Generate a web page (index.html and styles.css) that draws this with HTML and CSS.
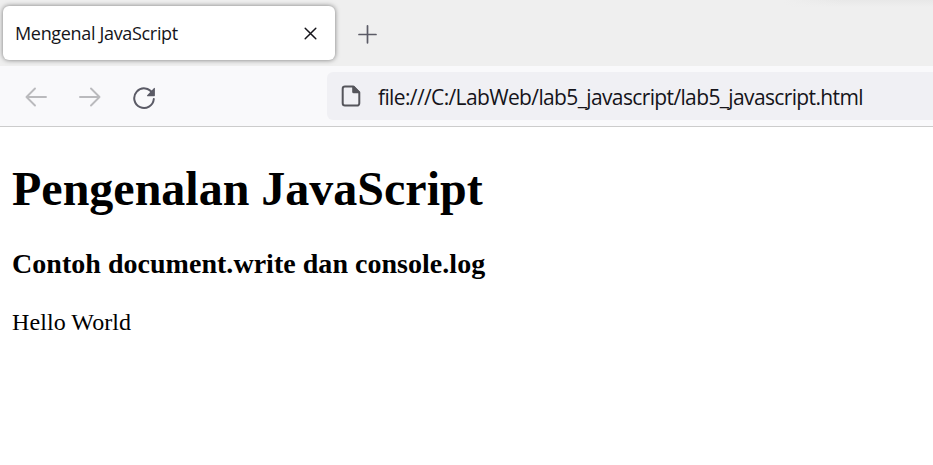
FILE: index.html
```html
<!DOCTYPE html>
<html lang="id">
<head>
<meta charset="utf-8">
<title>Mengenal JavaScript</title>
<link rel="stylesheet" href="styles.css">
</head>
<body>
<div class="tabbar">
  <div class="tab">
    <span class="tab-title">Mengenal JavaScript</span>
    <svg class="close" width="13" height="13" viewBox="0 0 13 13"><path d="M1.2 1.2l10.6 10.6M11.8 1.2L1.2 11.8"/></svg>
  </div>
  <svg class="plus" width="20" height="20" viewBox="0 0 20 20"><path d="M10.500 1.800v17M2 10.500h17"/></svg>
</div>
<div class="toolbar">
  <svg class="nav" width="24" height="24" viewBox="0 0 24 24"><path d="M22 12H2.5M11 3.5L2.5 12l8.500 8.500"/></svg>
  <svg class="nav" width="24" height="24" viewBox="0 0 24 24"><path d="M2 12h19.500M13 3.500l8.500 8.500-8.500 8.500"/></svg>
  <svg class="reload" width="24" height="24" viewBox="0 0 24 24"><path class="arc" d="M20.600 7.400A9.800 9.800 0 1 0 21.800 13"/><path class="head" d="M22.900 2.300v7.200q0 .7-.7.7h-6.600q-1.200 0-.4-.9l6.600-7q1.100-.9 1.100 0z"/></svg>
  <div class="urlbar">
    <svg class="doc" width="20" height="22" viewBox="0 0 20 22"><path class="page" d="M12 1.400H4A2.300 2.300 0 0 0 1.700 3.700v14.600A2.300 2.300 0 0 0 4 20.600h12a2.300 2.300 0 0 0 2.300-2.300V7.500L12.300 1.400z"/><path class="fold" d="M11.200 1h2L19 7v1.200h-6.300q-1.500 0-1.500-1.500z"/></svg>
    <span class="url">file:///C:/LabWeb/lab5_javascript/lab5_javascript.html</span>
  </div>
</div>
<main>
  <h1>Pengenalan JavaScript</h1>
  <h3>Contoh document.write dan console.log</h3>
  <p>Hello World</p>
</main>
</body>
</html>
```
FILE: styles.css
```css
* { box-sizing: border-box; }
body {
  margin: 0;
  height: 465px;
  overflow: hidden;
  background: #fff;
  color: #000;
  font-family: "Liberation Serif", serif;
}
svg { display: block; flex: none; fill: none; stroke-linecap: round; stroke-linejoin: round; }
.tabbar {
  display: flex;
  align-items: center;
  height: 66px;
  padding-left: 3px;
  background:
    linear-gradient(to right, #efefef, rgba(239, 239, 239, 0) 60px) right top / 150px 7px no-repeat,
    linear-gradient(#e8e8e8, #efefef) right top / 150px 7px no-repeat,
    #efefef;
}
.tab {
  display: flex;
  align-items: center;
  justify-content: space-between;
  width: 332px;
  height: 54px;
  padding: 0 18px 0 12px;
  border-radius: 6px;
  background: #fff;
  box-shadow: 0 0 5px rgba(0, 0, 0, .5);
}
.tab-title, .url { font-family: "Open Sans", sans-serif; white-space: nowrap; }
.tab-title { font-size: 18px; letter-spacing: -.33px; line-height: 24px; color: #15141a; }
.close { margin-top: 1px; stroke: #15141a; stroke-width: 1.500; }
.plus { margin: 2px 0 0 22px; stroke: #5b5b66; stroke-width: 1.700; }
.toolbar {
  display: flex;
  align-items: center;
  height: 61px;
  padding-left: 24px;
  border-bottom: 1px solid #ccc;
  background: #f9f9fb;
}
.nav { margin: 2px 30px 0 0; stroke: #bababd; stroke-width: 1.900; }
.reload { margin-top: 3px; }
.arc { stroke: #5b5b66; stroke-width: 2; }
.head { fill: #5b5b66; }
.urlbar {
  display: flex;
  align-items: center;
  flex: 1;
  height: 48px;
  margin-left: 171px;
  padding-left: 14px;
  border-radius: 6px 0 0 6px;
  background: #f0f0f4;
}
.page { stroke: #55555b; stroke-width: 2; }
.fold { fill: #55555b; }
.url { margin: 2px 0 0 17px; font-size: 21px; letter-spacing: -.63px; line-height: 30px; color: #15141a; }
main { padding: 34px 12px 0; }
h1, h3, p { margin: 0; }
h1 { font-size: 48px; line-height: 55px; }
h3 { margin-top: 32px; font-size: 28px; letter-spacing: .03px; line-height: 32px; }
p { margin-top: 28px; font-size: 24px; letter-spacing: .08px; line-height: 28px; }
```
